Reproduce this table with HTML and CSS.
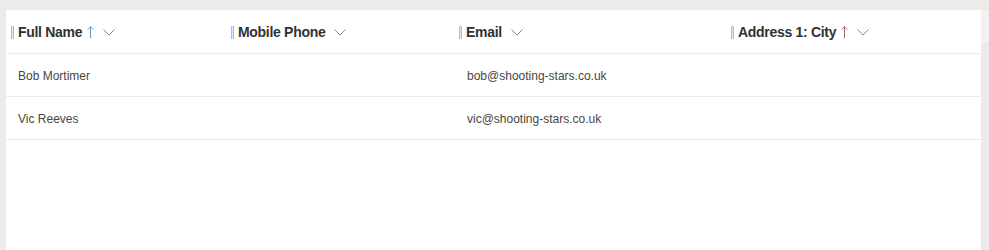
FILE: index.html
```html
<!DOCTYPE html>
<html>
<head>
<meta charset="utf-8">
<link rel="stylesheet" href="styles.css">
</head>
<body>
<div class="page">
  <div class="card">
    <div class="row head">
      <div class="hcell"><span class="bar blue"></span><span class="htext">Full Name</span><svg class="arrow blue-a" viewBox="0 0 7 12"><path d="M3.5 0.8 V12 M1 3.3 L3.5 0.8 L6 3.3"/></svg><svg class="chev" viewBox="0 0 12 7"><path d="M0.5 0.5 L6 6 L11.5 0.5"/></svg></div>
      <div class="hcell"><span class="bar blue"></span><span class="htext">Mobile Phone</span><svg class="chev" viewBox="0 0 12 7"><path d="M0.5 0.5 L6 6 L11.5 0.5"/></svg></div>
      <div class="hcell"><span class="bar peach"></span><span class="htext">Email</span><svg class="chev" viewBox="0 0 12 7"><path d="M0.5 0.5 L6 6 L11.5 0.5"/></svg></div>
      <div class="hcell"><span class="bar peach"></span><span class="htext">Address 1: City</span><svg class="arrow red-a" viewBox="0 0 7 12"><path d="M3.5 0.8 V12 M1 3.3 L3.5 0.8 L6 3.3"/></svg><svg class="chev" viewBox="0 0 12 7"><path d="M0.5 0.5 L6 6 L11.5 0.5"/></svg></div>
    </div>
    <div class="row data">
      <div class="cell">Bob Mortimer</div>
      <div class="cell"></div>
      <div class="cell">bob@shooting-stars.co.uk</div>
      <div class="cell"></div>
    </div>
    <div class="row data">
      <div class="cell">Vic Reeves</div>
      <div class="cell"></div>
      <div class="cell">vic@shooting-stars.co.uk</div>
      <div class="cell"></div>
    </div>
  </div>
  <div class="scroll"><div class="thumb"></div></div>
</div>
</body>
</html>
```
FILE: styles.css
```css
html, body { margin: 0; padding: 0; }
body {
  background: #edebe9;
  font-family: "Liberation Sans", Arial, sans-serif;
  color: #323130;
  width: 989px;
  height: 250px;
  overflow: hidden;
}
.page {
  display: flex;
  padding: 10px 0 0 6px;
  height: 240px;
}
.card {
  width: 975px;
  background: #ffffff;
  height: 240px;
}
.scroll {
  width: 8px;
  background: #edebe9;
}
.thumb {
  height: 32px;
  background: #f3f2f1;
}
.row {
  display: grid;
  grid-template-columns: 220px 228px 272px 1fr;
  border-bottom: 1px solid #edebe9;
}
.head { height: 43px; }
.data { height: 42px; }
.hcell {
  display: flex;
  align-items: center;
  padding-left: 5px;
  padding-top: 1px;
}
.bar {
  flex: none;
  width: 3px;
  height: 13px;
  margin-right: 4px;
  box-sizing: border-box;
  border-left: 1px solid;
  border-right: 1px solid;
}
.bar.blue { border-color: #9cc0ea; background: #dbe8f8; }
.bar.peach { border-color: #e3b089; background: #f5dccb; }
.htext {
  font-size: 14px;
  font-weight: bold;
  color: #323130;
  letter-spacing: -0.3px;
}
.arrow {
  flex: none;
  width: 7px;
  height: 12px;
  margin-left: 5px;
  fill: none;
  stroke-width: 1;
  stroke-linecap: round;
}
.blue-a { stroke: #5a9ad8; }
.red-a { stroke: #a4676a; }
.chev {
  flex: none;
  width: 12px;
  height: 7px;
  margin-left: 9px;
  fill: none;
  stroke: #8a8886;
  stroke-width: 1;
}
.cell {
  display: flex;
  align-items: center;
  padding-left: 12px;
  padding-top: 2px;
  font-size: 12px;
  color: #484644;
}
.cell:nth-child(3) { padding-left: 13px; }
```
